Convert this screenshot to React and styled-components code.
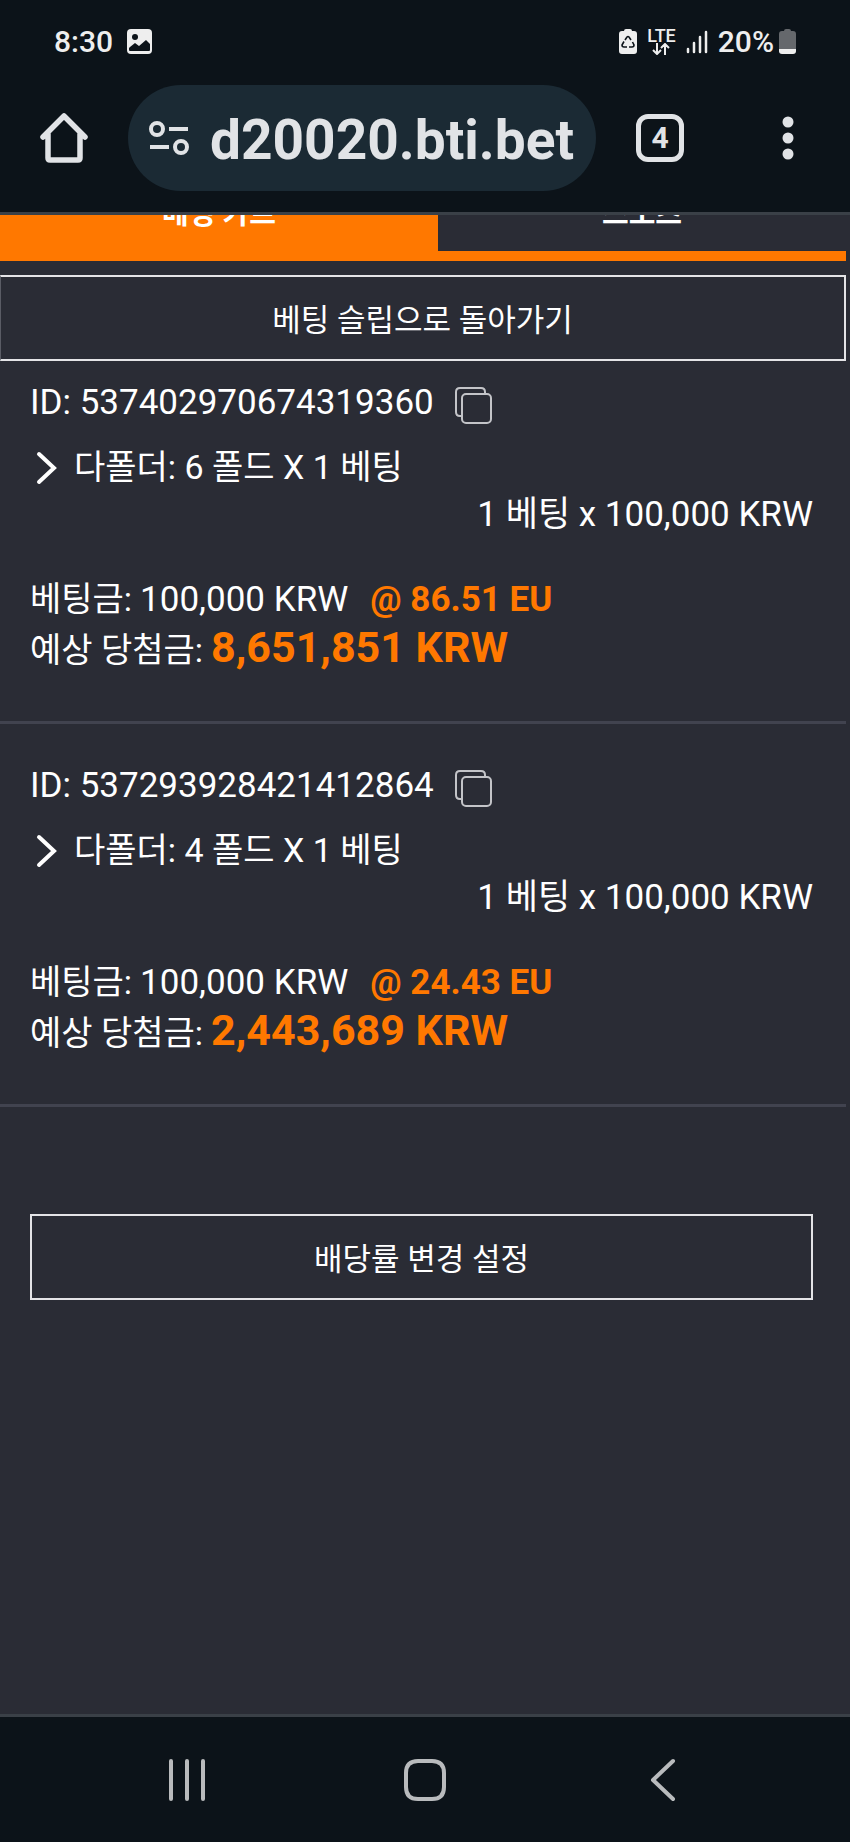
import styled, { createGlobalStyle } from 'styled-components';

const GlobalStyle = createGlobalStyle`
  * {
    box-sizing: border-box;
  }

  body {
    margin: 0;
    background-color: #2a2c35;
    color: #fff;
    font-family: Roboto, 'Noto Sans CJK KR', sans-serif;
  }

  button,
  input {
    margin: 0;
    padding: 0;
    border: none;
    background: none;
    color: inherit;
    font-family: inherit;
  }

  svg {
    display: block;
    flex-shrink: 0;
  }
`;

const Page = styled.div`
  min-height: 100vh;
  display: flex;
  flex-direction: column;
`;

const Header = styled.header`
  background-color: #0c1319;
  border-bottom: 3px solid #3a4047;
`;

const StatusBar = styled.div`
  height: 85px;
  padding: 0 54px 2px;
  display: flex;
  align-items: center;
  justify-content: space-between;
  color: #eee;
  font-size: 30px;
  font-weight: 500;
  line-height: 36px;
`;

const StatusGroup = styled.div`
  display: flex;
  align-items: center;
  gap: ${props => props.$gap}px;
`;

const Network = styled.div`
  display: flex;
  flex-direction: column;
  align-items: center;
  font-size: 18px;
  line-height: 15px;
`;

const Battery = styled.div`
  display: flex;
  align-items: center;
  gap: 5px;
`;

const Toolbar = styled.div`
  padding: 0 50px 21px 40px;
  display: flex;
  align-items: center;
  color: #e1e3e6;
`;

const IconButton = styled.button`
  display: flex;
  align-items: center;
  justify-content: center;
`;

const AddressBar = styled.label`
  flex: 1;
  min-width: 0;
  height: 106px;
  margin: 0 40px;
  padding: 0 20px;
  display: flex;
  align-items: center;
  gap: 20px;
  border-radius: 53px;
  background-color: #1b2a34;
`;

const AddressInput = styled.input`
  flex: 1;
  min-width: 0;
  padding-top: 4px;
  font-size: 55px;
  font-weight: 700;
  line-height: 64px;
  outline: none;
`;

const TabCount = styled.button`
  width: 48px;
  height: 48px;
  margin-right: 92px;
  border: 5px solid #e1e3e6;
  border-radius: 12px;
  font-size: 30px;
  font-weight: 700;
  line-height: 36px;
`;

const Main = styled.main`
  flex: 1;
  padding-right: 4px;
`;

/* the strip is scrolled halfway under the browser bar */
const Tabs = styled.nav`
  height: 46px;
  display: flex;
  align-items: flex-end;
  overflow: hidden;
`;

const Tab = styled.button`
  flex: ${props => (props.$active ? 438 : 408)};
  flex-shrink: 0;
  height: 90px;
  border-bottom: 10px solid #ff7800;
  background-color: ${props => (props.$active ? '#ff7800' : 'transparent')};
  font-size: 29px;
  font-weight: 700;
`;

const OutlineButton = styled.button`
  width: 100%;
  height: 86px;
  padding-top: 6px;
  border: 2px solid #e4e4e7;
  font-size: 31px;
  line-height: 48px;
`;

const BackButton = styled(OutlineButton)`
  border-left: 1px solid #5a5c65;
`;

const BackRow = styled.div`
  padding: 14px 0 18px;
`;

const Slip = styled.article`
  padding: 0 33px 50px 30px;
  border-bottom: 3px solid #41434f;
  font-size: 35px;
  line-height: 48px;

  & + & {
    padding-top: 38px;
  }
`;

const SlipId = styled.div`
  margin-bottom: 16px;
  display: flex;
  align-items: center;
  gap: 20px;
`;

const CopyButton = styled(IconButton)`
  padding-top: 4px;
`;

const FoldToggle = styled.button`
  display: flex;
  align-items: center;
  gap: 16px;
  padding-left: 6px;
  font-size: 34px;
  line-height: 48px;
`;

const Stake = styled.div`
  margin-bottom: 36px;
  text-align: right;
`;

const Line = styled.div`
  height: 48px;
  display: flex;
  align-items: baseline;
  gap: 8px;
`;

const Label = styled.span`
  font-size: 34px;
`;

const Odds = styled.strong`
  padding-left: 14px;
  color: #ff7800;
  font-weight: 700;
`;

const Payout = styled.strong`
  color: #ff7800;
  font-size: 43px;
  font-weight: 700;
`;

const Settings = styled.div`
  padding: 107px 33px 40px 30px;
`;

const NavBar = styled.footer`
  height: 128px;
  border-top: 3px solid #3a4047;
  padding: 0 68px;
  display: grid;
  grid-template-columns: repeat(3, 1fr);
  background-color: #0c1319;
  color: #b9bbbd;
`;

const slips = [
  { id: '537402970674319360', folds: 6, odds: '86.51', payout: '8,651,851' },
  { id: '537293928421412864', folds: 4, odds: '24.43', payout: '2,443,689' }
];

const PictureIcon = () => (
  <svg width='25' height='25' viewBox='0 0 25 25'>
    <rect width='25' height='25' rx='4' fill='#eee' />
    <circle cx='8' cy='8' r='3' fill='#0c1319' />
    <path
      d='M3 18l5-4 4 3 7-6 4 4v6q0 1-1 1H3q-1 0-1-1v-2z'
      fill='#0c1319'
    />
  </svg>
);

const RecycleBatteryIcon = () => (
  <svg width='18' height='25' viewBox='0 0 18 25'>
    <path
      d='M5 2q0-2 2-2h4q2 0 2 2h2q3 0 3 3v17q0 3-3 3H3q-3 0-3-3V5q0-3 3-3z'
      fill='#eee'
    />
    <path
      d='M6 11l2-3q1-1 2 0l2 3M13.500 13l1.500 3q0 2-2 2h-3M8 18H5q-2 0-2-2l2-3.500'
      fill='none'
      stroke='#0c1319'
      strokeWidth='1.600'
    />
  </svg>
);

const DataArrowsIcon = () => (
  <svg width='20' height='12' viewBox='0 0 20 12'>
    <path
      d='M6 0v11M2 7l4 4 4-4M14 12V1M10 5l4-4 4 4'
      fill='none'
      stroke='#eee'
      strokeWidth='2'
    />
  </svg>
);

const SignalIcon = () => (
  <svg width='22' height='24' viewBox='0 0 22 24'>
    <path
      d='M2 19v3M8 13v9M14 7v15M20 2v20'
      fill='none'
      stroke='#eee'
      strokeWidth='2.500'
      strokeLinecap='round'
    />
  </svg>
);

const BatteryIcon = () => (
  <svg width='17' height='25' viewBox='0 0 17 25'>
    <path
      d='M5 2q0-2 2-2h3q2 0 2 2h2q3 0 3 3v15H0V5q0-3 3-3z'
      fill='#65686c'
    />
    <path d='M0 20h17v2q0 3-3 3H3q-3 0-3-3z' fill='#eee' />
  </svg>
);

const HomeIcon = () => (
  <svg width='48' height='50' viewBox='0 0 48 50'>
    <path
      d='M3 24L24 3l21 21M8 21v24q0 2 2 2h28q2 0 2-2V21'
      fill='none'
      stroke='currentColor'
      strokeWidth='5.500'
      strokeLinecap='round'
      strokeLinejoin='round'
    />
  </svg>
);

const SiteSettingsIcon = () => (
  <svg width='42' height='34' viewBox='0 0 42 34'>
    <g fill='none' stroke='currentColor' strokeWidth='4'>
      <circle cx='9' cy='8' r='6' />
      <circle cx='33' cy='26' r='6' />
      <path d='M21 8h19M2 26h19' />
    </g>
  </svg>
);

const MoreIcon = () => (
  <svg width='24' height='44' viewBox='0 0 24 44' fill='currentColor'>
    <circle cx='12' cy='6' r='5.500' />
    <circle cx='12' cy='22' r='5.500' />
    <circle cx='12' cy='38' r='5.500' />
  </svg>
);

const CopyIcon = () => (
  <svg width='38' height='38' viewBox='0 0 38 38'>
    <g fill='none' stroke='#c3c4c8' strokeWidth='2'>
      <path d='M8 30H6q-4 0-4-4V6q0-4 4-4h21q4 0 4 4v2' />
      <rect x='8' y='8' width='29' height='29' rx='4' />
    </g>
  </svg>
);

const ChevronIcon = () => (
  <svg width='22' height='36' viewBox='0 0 22 36'>
    <path
      d='M3 5l15 14L3 33'
      fill='none'
      stroke='#fff'
      strokeWidth='4'
      strokeLinecap='round'
    />
  </svg>
);

const NavIcon = ({ d }) => (
  <svg width='44' height='44' viewBox='0 0 44 44'>
    <path
      d={d}
      fill='none'
      stroke='currentColor'
      strokeWidth='4'
      strokeLinecap='round'
      strokeLinejoin='round'
    />
  </svg>
);

const BetSlip = ({ slip }) => {
  return (
    <Slip>
      <SlipId>
        <span>ID: {slip.id}</span>
        <CopyButton aria-label='ID 복사'>
          <CopyIcon />
        </CopyButton>
      </SlipId>
      <FoldToggle>
        <ChevronIcon />
        다폴더: {slip.folds} 폴드 X 1 베팅
      </FoldToggle>
      <Stake>1 베팅 x 100,000 KRW</Stake>
      <Line>
        <Label>베팅금:</Label>
        <span>100,000 KRW</span>
        <Odds>@ {slip.odds} EU</Odds>
      </Line>
      <Line>
        <Label>예상 당첨금:</Label>
        <Payout>{slip.payout} KRW</Payout>
      </Line>
    </Slip>
  );
};

const App = () => {
  return (
    <Page>
      <GlobalStyle />
      <Header>
        <StatusBar>
          <StatusGroup $gap={14}>
            <span>8:30</span>
            <PictureIcon />
          </StatusGroup>
          <StatusGroup $gap={10}>
            <RecycleBatteryIcon />
            <Network>
              LTE
              <DataArrowsIcon />
            </Network>
            <SignalIcon />
            <Battery>
              20%
              <BatteryIcon />
            </Battery>
          </StatusGroup>
        </StatusBar>
        <Toolbar>
          <IconButton aria-label='홈'>
            <HomeIcon />
          </IconButton>
          <AddressBar>
            <SiteSettingsIcon />
            <AddressInput
              type='text'
              aria-label='주소'
              defaultValue='d20020.bti.bet'
            />
          </AddressBar>
          <TabCount>4</TabCount>
          <IconButton aria-label='더보기'>
            <MoreIcon />
          </IconButton>
        </Toolbar>
      </Header>
      <Main>
        <Tabs>
          <Tab $active>베팅 카트</Tab>
          <Tab>스포츠</Tab>
        </Tabs>
        <BackRow>
          <BackButton>베팅 슬립으로 돌아가기</BackButton>
        </BackRow>
        {slips.map(slip => (
          <BetSlip key={slip.id} slip={slip} />
        ))}
        <Settings>
          <OutlineButton>배당률 변경 설정</OutlineButton>
        </Settings>
      </Main>
      <NavBar>
        <IconButton aria-label='최근 앱'>
          <NavIcon d='M6 3v38M22 3v38M38 3v38' />
        </IconButton>
        <IconButton aria-label='홈 화면'>
          <NavIcon d='M15 3h14q12 0 12 12v14q0 12-12 12H15Q3 41 3 29V15Q3 3 15 3z' />
        </IconButton>
        <IconButton aria-label='뒤로'>
          <NavIcon d='M32 3L12 22l20 19' />
        </IconButton>
      </NavBar>
    </Page>
  );
};

export default App;
